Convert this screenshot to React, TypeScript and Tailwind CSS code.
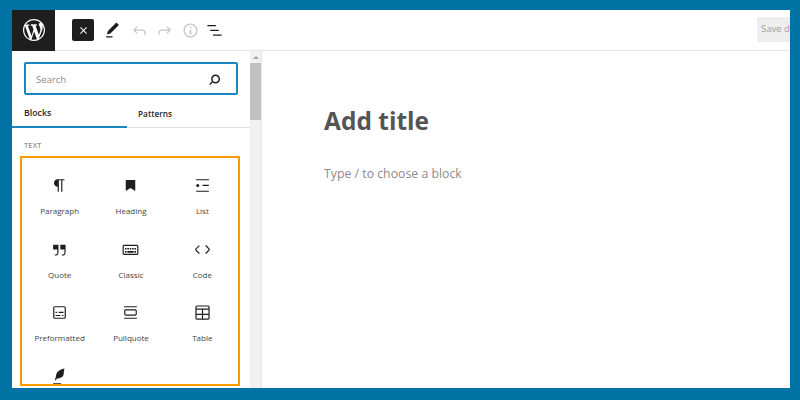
import React from 'react';

const Icon: React.FC<{ d: string; size?: number; className?: string; box?: string }> = ({ d, size = 19, className = '', box = '0 0 24 24' }) => (
  <svg viewBox={box} width={size} height={size} fill="currentColor" className={className}>
    <path fillRule="evenodd" d={d} />
  </svg>
);

const wpLogo =
  'M20 10c0-5.51-4.49-10-10-10C4.48 0 0 4.49 0 10c0 5.52 4.48 10 10 10 5.51 0 10-4.48 10-10zM7.78 15.37L4.37 6.22c.55-.02 1.17-.08 1.17-.08.5-.06.44-1.13-.06-1.11 0 0-1.45.11-2.37.11-.18 0-.37 0-.58-.01C4.12 2.69 6.87 1.11 10 1.11c2.33 0 4.45.87 6.05 2.34-.68-.11-1.65.39-1.65 1.58 0 .74.45 1.36.9 2.1.35.61.55 1.36.55 2.46 0 1.49-1.4 5-1.4 5l-3.03-8.37c.54-.02.82-.17.82-.17.5-.05.44-1.25-.06-1.22 0 0-1.44.12-2.38.12-.87 0-2.33-.12-2.33-.12-.5-.03-.56 1.2-.06 1.22l.92.08 1.26 3.41zM17.41 10c.24-.64.74-1.87.43-4.25.7 1.29 1.05 2.71 1.05 4.25 0 3.29-1.73 6.24-4.4 7.78.97-2.59 1.94-5.2 2.92-7.78zM6.1 18.09C3.12 16.65 1.11 13.53 1.11 10c0-1.3.23-2.48.72-3.59C3.25 10.3 4.67 14.2 6.1 18.09zm4.03-6.63l2.58 6.98c-.86.29-1.76.45-2.71.45-.79 0-1.57-.11-2.29-.33.81-2.38 1.62-4.74 2.42-7.1z';
const close = 'M6 4.500l6 6 6-6 1.500 1.500-6 6 6 6-1.500 1.500-6-6-6 6L4.500 18l6-6-6-6z';
const pencil = 'M20.1 5.1L16.9 2 6.2 12.7l-1.3 4.4 4.5-1.3L20.1 5.1zM4 20.8h8v-1.5H4v1.5z';
const undo = 'M18.3 11.7c-.6-.6-1.4-.9-2.3-.9H6.7l2.9-3.3-1.1-1-4.5 5L8.5 16l1-1-2.7-2.7H16c.5 0 .9.2 1.3.5 1 1 1 3.4 1 4.5v.3h1.5v-.2c0-1.5 0-4.3-1.5-5.7z';
const redo = 'M15.6 6.5l-1.1 1 2.9 3.3H8c-.9 0-1.7.3-2.3.9-1.4 1.5-1.4 4.2-1.4 5.6v.2h1.5v-.3c0-1.1 0-3.5 1-4.5.3-.3.7-.5 1.3-.5h9.2L14.5 15l1.1 1.1 4.6-4.6-4.6-5z';
const info = 'M12 3.2c-4.8 0-8.8 3.9-8.8 8.8 0 4.8 3.9 8.8 8.8 8.8 4.8 0 8.8-3.9 8.8-8.8 0-4.8-4-8.8-8.8-8.8zm0 16c-4 0-7.2-3.3-7.2-7.2C4.8 8 8 4.8 12 4.8s7.2 3.3 7.2 7.2c0 4-3.2 7.2-7.2 7.2zM11 17h2v-6h-2v6zm0-8h2V7h-2v2z';
const listView = 'M13.8 5.2H3v1.5h10.8V5.2zm-3.6 12v1.5H21v-1.5H10.2zm7.2-6H6.6v1.5h10.8v-1.5z';
const search = 'M13.500 5C10 5 7.200 7.900 7.200 11.400c0 1.300.4 2.500 1.100 3.500l-3.800 3.300 1.300 1.500 3.800-3.300c1.100.9 2.500 1.400 3.900 1.400 3.500 0 6.300-2.900 6.300-6.400S17 5 13.500 5zm0 10.700c-2.400 0-4.300-1.900-4.300-4.300s1.900-4.400 4.300-4.400 4.300 2 4.300 4.400-1.900 4.300-4.300 4.300z';

const blocks = [
  { label: 'Paragraph', d: 'M18.3 4H9.9v-.1l-.9.2c-2.3.4-4 2.4-4 4.8s1.7 4.4 4 4.8l.7.1V20h1.5V5.5h2.9V20h1.5V5.5h2.7V4z' },
  { label: 'Heading', d: 'M6 5h12v14l-6-4-6 4z' },
  { label: 'List', d: 'M4 4v1.5h16V4H4zm8 8.5h8V11h-8v1.5zM4 20h16v-1.5H4V20zm4-8c0-1.1-.9-2-2-2s-2 .9-2 2 .9 2 2 2 2-.9 2-2z' },
  { label: 'Quote', d: 'M13 6v6h5.2v4c0 .8-.2 1.4-.5 1.7-.6.6-1.6.6-2.5.5h-.3v1.5h.5c1 0 2.3-.1 3.3-1 .6-.6 1-1.6 1-2.8V6H13zm-9 6h5.2v4c0 .8-.2 1.4-.5 1.7-.6.6-1.6.6-2.5.5h-.3v1.5h.5c1 0 2.3-.1 3.3-1 .6-.6 1-1.6 1-2.8V6H4v6z' },
  { label: 'Classic', d: 'M20 6H4c-1.1 0-2 .9-2 2v9c0 1.1.9 2 2 2h16c1.1 0 2-.9 2-2V8c0-1.1-.9-2-2-2zm.5 11c0 .3-.2.5-.5.5H4c-.3 0-.5-.2-.5-.5V8c0-.3.2-.5.5-.5h16c.3 0 .5.2.5.5v9zM10 10H8v2h2v-2zm-5 2h2v-2H5v2zm8-2h-2v2h2v-2zm-5 6h8v-2H8v2zm6-4h2v-2h-2v2zm3 0h2v-2h-2v2zm0 4h2v-2h-2v2zM5 16h2v-2H5v2z' },
  { label: 'Code', d: 'M20.8 10.7l-4.3-4.3-1.1 1.1 4.3 4.3c.1.1.1.3 0 .4l-4.3 4.3 1.1 1.1 4.3-4.3c.7-.8.7-1.9 0-2.6zM4.2 11.8l4.3-4.3-1-1-4.3 4.3c-.7.7-.7 1.8 0 2.5l4.3 4.3 1.1-1.1-4.3-4.3c-.2-.1-.2-.3-.1-.4z' },
  { label: 'Preformatted', d: 'M18 4H6c-1.1 0-2 .9-2 2v12c0 1.1.9 2 2 2h12c1.1 0 2-.9 2-2V6c0-1.1-.9-2-2-2zm.5 14c0 .3-.2.5-.5.5H6c-.3 0-.5-.2-.5-.5V6c0-.3.2-.5.5-.5h12c.3 0 .5.2.5.5v12zM7 16.5h6V15H7v1.5zm4-4h6V11h-6v1.5zM9 11H7v1.5h2V11zm6 5.5h2V15h-2v1.5z' },
  { label: 'Pullquote', d: 'M18 8H6c-1.1 0-2 .9-2 2v4c0 1.1.9 2 2 2h12c1.1 0 2-.9 2-2v-4c0-1.1-.9-2-2-2zm.5 6c0 .3-.2.5-.5.5H6c-.3 0-.5-.2-.5-.5v-4c0-.3.2-.5.5-.5h12c.3 0 .5.2.5.5v4zM4 4v1.5h16V4H4zm0 16h16v-1.5H4V20z' },
  { label: 'Table', d: 'M5 3h14a2 2 0 012 2v14a2 2 0 01-2 2H5a2 2 0 01-2-2V5a2 2 0 012-2zM4.500 5v2h15V5a.5.5 0 00-.5-.5H5a.5.5 0 00-.5.5zM4.500 8.500v5h6.750v-5zM12.750 8.500v5h6.750v-5zM4.500 15v4c0 .3.2.5.5.5h6.250V15zM12.750 15v4.500H19c.3 0 .5-.2.5-.5v-4z' },
  { label: '', d: 'M17.800 2l-.9.300c-.1 0-3.600 1-5.200 2.100C10 5.500 9.300 6.500 8.900 7.100c-.6.900-1.700 4.700-1.700 6.300l-.9 2.300c-.2.400 0 .800.400 1 .1 0 .2.100.3.100.3 0 .6-.2.7-.5l.6-1.500c.3 0 .7-.1 1.200-.2.700-.1 1.400-.3 2.200-.5.800-.2 1.600-.5 2.400-.8.700-.3 1.400-.7 1.900-1.200s.8-1.200 1-1.900c.2-.7.3-1.600.4-2.400.1-.8.1-1.700.2-2.300.1-.7.2-1.200.3-1.600l.4-.9zM4 20.500h10V22H4z' },
];

export default function App() {
  return (
    <div className="h-[400px] w-[800px] overflow-hidden bg-[#0073a5] pb-[12px] pl-[12px] pr-[10px] pt-[10px] font-['Open_Sans','Noto_Sans',sans-serif]">
      <div className="flex h-full flex-col overflow-hidden bg-white">
        {/* top bar */}
        <header className="flex h-[41px] shrink-0 items-center border-b border-[#e6e6e6]">
          <div className="flex h-[41px] w-[43px] shrink-0 items-center justify-center bg-[#1e1e1e] text-white">
            <Icon d={wpLogo} size={22} box="0 0 20 20" />
          </div>
          <div className="flex min-w-0 flex-1 items-center pl-[17px]">
            <div className="flex h-[22px] w-[22px] items-center justify-center rounded-[2px] bg-[#1e1e1e] text-white">
              <Icon d={close} size={11} />
            </div>
            <Icon d={pencil} className="ml-[9px] text-[#1e1e1e]" />
            <Icon d={undo} className="ml-[8px] text-[#c4c4c4]" />
            <Icon d={redo} className="ml-[6px] text-[#c4c4c4]" />
            <Icon d={info} className="ml-[7px] text-[#c4c4c4]" />
            <Icon d={listView} className="ml-[5px] text-[#1e1e1e]" />
          </div>
          <div className="mb-[2px] mr-[-32px] flex h-[25px] w-[65px] shrink-0 items-center bg-[#eeeeee] pl-[4px] text-[9.500px] whitespace-nowrap text-[#a0a0a0]">
            Save draft
          </div>
        </header>

        <div className="flex min-h-0 flex-1">
          {/* inserter panel */}
          <aside className="flex w-[238px] shrink-0 flex-col overflow-hidden">
            <div className="px-[12px] pt-[11px]">
              <div className="flex h-[33px] items-center justify-between rounded-[2px] border-2 border-[#1a86bf] pl-[10px] pr-[13px] pt-[3px]">
                <span className="text-[9.500px] text-[#8a8a8a]">Search</span>
                <Icon d={search} size={17} className="mb-[2px] text-[#1e1e1e]" />
              </div>
            </div>
            <div className="mt-[6px] flex h-[27px] shrink-0 border-b border-[#e0e0e0]">
              <div className="flex h-[27px] w-[115px] items-center border-b-[2px] border-[#1a86bf] pl-[12px] text-[8.800px] font-semibold text-[#2a2a2a]">
                Blocks
              </div>
              <div className="flex h-[26px] items-center pl-[11px] text-[8.300px] font-semibold text-[#2a2a2a]">Patterns</div>
            </div>
            <div className="pl-[12px] pt-[12px] text-[7.500px] leading-[11px] tracking-[0.2px] text-[#6f6f6f]">TEXT</div>
            <div className="ml-[8px] mt-[5px] h-[230px] w-[220px] shrink-0 overflow-hidden border-2 border-[#fb9a00]">
              <div className="grid grid-cols-3 pl-[2px] pt-[18px]">
                {blocks.map((b) => (
                  <div key={b.d} className="flex h-[63.500px] flex-col items-center text-[#1e1e1e]">
                    <Icon d={b.d} />
                    {b.label && <span className="mt-[10px] text-[8px] leading-[11px] text-[#444444]">{b.label}</span>}
                  </div>
                ))}
              </div>
            </div>
          </aside>

          {/* panel scrollbar */}
          <div className="flex w-[11px] shrink-0 flex-col items-center bg-[#f1f1f1]">
            <div className="mt-[5px] h-0 w-0 border-x-[3px] border-b-[3px] border-x-transparent border-b-[#a3a3a3]" />
            <div className="mt-[4px] h-[57px] w-full bg-[#c1c1c1]" />
          </div>

          {/* editor canvas */}
          <main className="min-w-0 flex-1 border-l border-[#e6e6e6] pl-[62px] pt-[52px]">
            <h1 className="text-[24.500px] leading-[36px] font-bold text-[#555555]">Add title</h1>
            <p className="mt-[26px] text-[12.300px] leading-[18px] text-[#8a8a8a]">Type / to choose a block</p>
          </main>
        </div>
      </div>
    </div>
  );
}
